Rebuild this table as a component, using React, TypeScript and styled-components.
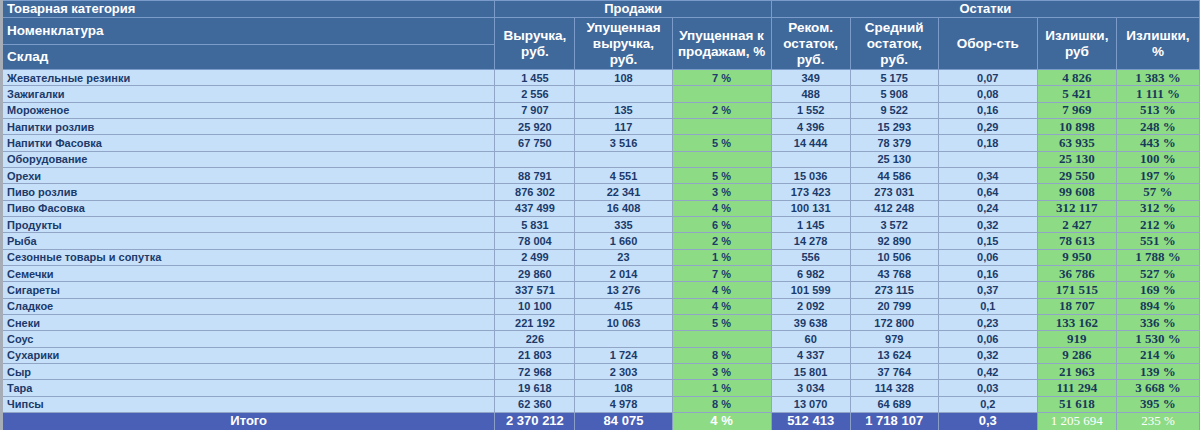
import React from "react";
import styled, { createGlobalStyle } from "styled-components";

const Global = createGlobalStyle`
  html, body { margin: 0; padding: 0; background: #e9edf3; }
  body { font-family: "Liberation Sans", Arial, sans-serif; }
`;

const Table = styled.table`
  width: 1200px;
  table-layout: fixed;
  border-collapse: collapse;
  border-left: 3px solid #a7adb6;
  box-sizing: border-box;
`;

const HeadCell = styled.th<{ $align?: "left" | "center" }>`
  background: #40699b;
  color: #ffffff;
  font-family: "Liberation Sans", Arial, sans-serif;
  font-weight: bold;
  font-size: 13.5px;
  line-height: 16px;
  text-align: ${(p) => p.$align ?? "center"};
  padding: 0 4px;
  border: 1px solid #7b9ccb;
  vertical-align: middle;
`;

const GroupCell = styled(HeadCell)`
  font-size: 13px;
  height: 16px;
`;

const DataCell = styled.td<{ $green?: boolean; $serif?: boolean; $left?: boolean }>`
  background: ${(p) => (p.$green ? "#8edb86" : "#c6e0f9")};
  color: ${(p) => (p.$serif ? "#173a5a" : "#1c3a6a")};
  font-family: ${(p) =>
    p.$serif ? `"Liberation Serif", "Times New Roman", serif` : `"Liberation Sans", Arial, sans-serif`};
  font-weight: bold;
  font-size: ${(p) => (p.$serif ? "13px" : "11px")};
  line-height: 14px;
  text-align: ${(p) => (p.$left ? "left" : "center")};
  padding: 0 4px;
  border: 1px solid #91a6c6;
  white-space: nowrap;
  overflow: hidden;
`;

const TotalCell = styled.td<{ $green?: boolean; $serif?: boolean }>`
  background: ${(p) => (p.$green ? "#8edb86" : "#4a5fb6")};
  color: #ffffff;
  font-family: ${(p) =>
    p.$serif ? `"Liberation Serif", "Times New Roman", serif` : `"Liberation Sans", Arial, sans-serif`};
  font-weight: ${(p) => (p.$serif ? "normal" : "bold")};
  font-size: 13px;
  line-height: 16px;
  text-align: center;
  padding: 0 4px;
  border: 1px solid #8a9fc8;
  white-space: nowrap;
`;

const DataRow = styled.tr`
  height: 16.33px;
`;

const TotalRow = styled.tr`
  height: 18px;
`;

type Row = [string, string, string, string, string, string, string, string, string];

const rows: Row[] = [
  ["Жевательные резинки", "1 455", "108", "7 %", "349", "5 175", "0,07", "4 826", "1 383 %"],
  ["Зажигалки", "2 556", "", "", "488", "5 908", "0,08", "5 421", "1 111 %"],
  ["Мороженое", "7 907", "135", "2 %", "1 552", "9 522", "0,16", "7 969", "513 %"],
  ["Напитки розлив", "25 920", "117", "", "4 396", "15 293", "0,29", "10 898", "248 %"],
  ["Напитки Фасовка", "67 750", "3 516", "5 %", "14 444", "78 379", "0,18", "63 935", "443 %"],
  ["Оборудование", "", "", "", "", "25 130", "", "25 130", "100 %"],
  ["Орехи", "88 791", "4 551", "5 %", "15 036", "44 586", "0,34", "29 550", "197 %"],
  ["Пиво розлив", "876 302", "22 341", "3 %", "173 423", "273 031", "0,64", "99 608", "57 %"],
  ["Пиво Фасовка", "437 499", "16 408", "4 %", "100 131", "412 248", "0,24", "312 117", "312 %"],
  ["Продукты", "5 831", "335", "6 %", "1 145", "3 572", "0,32", "2 427", "212 %"],
  ["Рыба", "78 004", "1 660", "2 %", "14 278", "92 890", "0,15", "78 613", "551 %"],
  ["Сезонные товары и сопутка", "2 499", "23", "1 %", "556", "10 506", "0,06", "9 950", "1 788 %"],
  ["Семечки", "29 860", "2 014", "7 %", "6 982", "43 768", "0,16", "36 786", "527 %"],
  ["Сигареты", "337 571", "13 276", "4 %", "101 599", "273 115", "0,37", "171 515", "169 %"],
  ["Сладкое", "10 100", "415", "4 %", "2 092", "20 799", "0,1", "18 707", "894 %"],
  ["Снеки", "221 192", "10 063", "5 %", "39 638", "172 800", "0,23", "133 162", "336 %"],
  ["Соус", "226", "", "", "60", "979", "0,06", "919", "1 530 %"],
  ["Сухарики", "21 803", "1 724", "8 %", "4 337", "13 624", "0,32", "9 286", "214 %"],
  ["Сыр", "72 968", "2 303", "3 %", "15 801", "37 764", "0,42", "21 963", "139 %"],
  ["Тара", "19 618", "108", "1 %", "3 034", "114 328", "0,03", "111 294", "3 668 %"],
  ["Чипсы", "62 360", "4 978", "8 %", "13 070", "64 689", "0,2", "51 618", "395 %"],
];

const total: Row = ["Итого", "2 370 212", "84 075", "4 %", "512 413", "1 718 107", "0,3", "1 205 694", "235 %"];

const widths = [493, 80, 97, 99, 79, 88, 99, 79, 83];

export default function App() {
  return (
    <>
      <Global />
      <Table>
        <colgroup>
          {widths.map((w, i) => (
            <col key={i} style={{ width: w }} />
          ))}
        </colgroup>
        <thead>
          <tr style={{ height: 17 }}>
            <GroupCell $align="left">Товарная категория</GroupCell>
            <GroupCell colSpan={3}>Продажи</GroupCell>
            <GroupCell colSpan={5}>Остатки</GroupCell>
          </tr>
          <tr style={{ height: 27 }}>
            <HeadCell $align="left">Номенклатура</HeadCell>
            <HeadCell rowSpan={2}>
              Выручка,
              <br />
              руб.
            </HeadCell>
            <HeadCell rowSpan={2}>
              Упущенная
              <br />
              выручка,
              <br />
              руб.
            </HeadCell>
            <HeadCell rowSpan={2}>
              Упущенная к
              <br />
              продажам, %
            </HeadCell>
            <HeadCell rowSpan={2}>
              Реком.
              <br />
              остаток,
              <br />
              руб.
            </HeadCell>
            <HeadCell rowSpan={2}>
              Средний
              <br />
              остаток,
              <br />
              руб.
            </HeadCell>
            <HeadCell rowSpan={2}>Обор-сть</HeadCell>
            <HeadCell rowSpan={2}>
              Излишки,
              <br />
              руб
            </HeadCell>
            <HeadCell rowSpan={2}>
              Излишки,
              <br />%
            </HeadCell>
          </tr>
          <tr style={{ height: 25 }}>
            <HeadCell $align="left">Склад</HeadCell>
          </tr>
        </thead>
        <tbody>
          {rows.map((r) => (
            <DataRow key={r[0]}>
              <DataCell $left>{r[0]}</DataCell>
              <DataCell>{r[1]}</DataCell>
              <DataCell>{r[2]}</DataCell>
              <DataCell $green>{r[3]}</DataCell>
              <DataCell>{r[4]}</DataCell>
              <DataCell>{r[5]}</DataCell>
              <DataCell>{r[6]}</DataCell>
              <DataCell $green $serif>
                {r[7]}
              </DataCell>
              <DataCell $green $serif>
                {r[8]}
              </DataCell>
            </DataRow>
          ))}
          <TotalRow>
            <TotalCell>{total[0]}</TotalCell>
            <TotalCell>{total[1]}</TotalCell>
            <TotalCell>{total[2]}</TotalCell>
            <TotalCell $green>{total[3]}</TotalCell>
            <TotalCell>{total[4]}</TotalCell>
            <TotalCell>{total[5]}</TotalCell>
            <TotalCell>{total[6]}</TotalCell>
            <TotalCell $green $serif>
              {total[7]}
            </TotalCell>
            <TotalCell $green $serif>
              {total[8]}
            </TotalCell>
          </TotalRow>
        </tbody>
      </Table>
    </>
  );
}
